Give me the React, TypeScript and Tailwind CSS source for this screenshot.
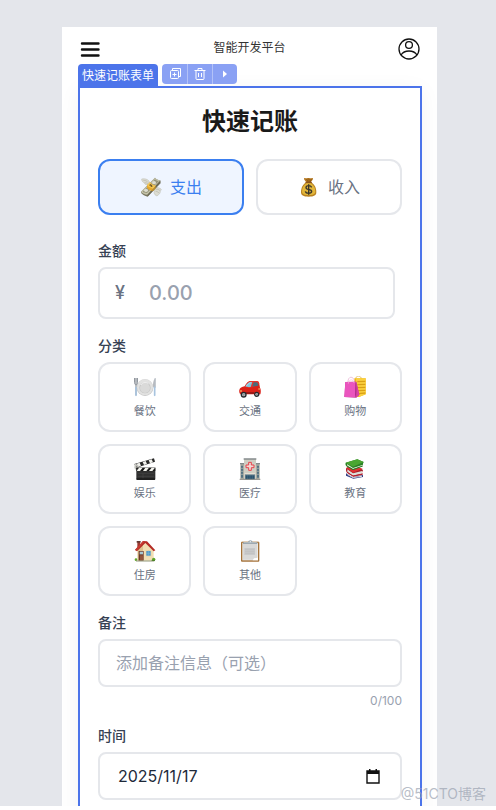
import { useState, type ReactNode } from "react";

type Kind = "expense" | "income";

function MoneyWings() {
  return (
    <svg viewBox="0 0 66 66" className="w-[22px] h-[22px]" aria-hidden="true">
      <path d="M5 9c9-2 17 0 22 6l4 9-9 3c-6-1-9-4-9-7-5-1-8-5-8-11z" fill="#dcdcd2" stroke="#b9b9ad" strokeWidth="1.5" />
      <path d="M10 13c6 0 11 2 15 7M14 20c4 0 7 1 10 4" stroke="#a9a99d" strokeWidth="1.5" fill="none" />
      <path d="M45 35c8-1 15 1 19 5-1 3-2 4-3 5 0 4-1 6-2 8-3 3-6 5-8 7-5-2-8-5-9-10z" fill="#dcdcd2" stroke="#b9b9ad" strokeWidth="1.5" />
      <path d="M47 40c5-1 9 0 13 4M47 46c4 0 7 2 10 5" stroke="#a9a99d" strokeWidth="1.5" fill="none" />
      <path d="M3 47 45 5c3 4 8 7 16 8l1 8-39 41C14 60 8 56 4 52z" fill="#77755f" />
      <path d="M3 47 45 5c3 4 8 7 16 8L22 56C13 55 7 52 3 47z" fill="#c4c2a8" />
      <path d="M8 47 45 10c3 3 6 5 11 6L21 51c-6-1-10-2-13-4z" fill="#96947a" />
      <ellipse cx="42" cy="20" rx="6" ry="5" fill="#deddd0" />
      <ellipse cx="18" cy="43" rx="6" ry="5" fill="#deddd0" />
      <path d="m21 28 9-9c4 5 10 9 17 10v8l-8 9c-8-2-15-6-18-11z" fill="#e6a72c" />
      <path d="m21 28 9-9c4 5 10 9 17 10l-8 9c-7-2-14-5-18-10z" fill="#f2c652" />
      <path d="m28 27 8 5M31 24l6 7" stroke="#6b5220" strokeWidth="3" />
      <path d="m23 57 38-40M23 60l38-39" stroke="#55533f" strokeWidth="1.2" />
    </svg>
  );
}

function MoneyBag() {
  return (
    <svg viewBox="0 0 66 66" className="w-[22px] h-[22px]" aria-hidden="true">
      <path d="M21 6c4 2 6-1 10 0 4-1 6 2 11 0 3 0 4 2 2 5l-7 9H26l-7-9c-2-3-1-5 2-5z" fill="#b57820" />
      <path d="m26 9 4 9M33 8v10M40 9l-4 9" stroke="#744712" strokeWidth="2" />
      <path d="M25 19h14c10 5 16 17 16 29 0 10-7 14-23 14S9 58 9 48c0-12 6-24 16-29z" fill="#b98220" />
      <path d="M26 22h12c9 5 14 15 14 25 0 7-7 10-20 10s-20-3-20-10c0-10 5-20 14-25z" fill="#e2b63a" />
      <path d="M24 19h16" stroke="#8b531c" strokeWidth="4" strokeLinecap="round" />
      <path d="M41 34c-2-4-5-5-9-5-5 0-8 2-8 6 0 8 17 3 17 11 0 4-4 6-9 6s-9-2-10-6M32 25v31" stroke="#3a362c" strokeWidth="4" fill="none" />
    </svg>
  );
}

function Plate() {
  return (
    <svg viewBox="0 0 66 66" className="w-[22px] h-[22px]" aria-hidden="true">
      <circle cx="33" cy="35" r="25" fill="#c4c4c4" />
      <circle cx="33" cy="34" r="24" fill="#e2e2e1" />
      <circle cx="33" cy="35" r="17" fill="#c6c6c5" />
      <circle cx="33" cy="36" r="15" fill="#dadad9" />
      <path d="M20 27c5-8 16-10 23-4" stroke="#f8f8f8" strokeWidth="3" fill="none" />
      <path d="M2 6v14c0 4 2 6 4 7v31M10 6v14c0 4-1 6-4 7M6 6v20" stroke="#7e858d" strokeWidth="3" fill="none" />
      <path d="M6 35v23" stroke="#a8c4df" strokeWidth="5" strokeLinecap="round" />
      <path d="M65 6c-6 3-8 13-7 28h7z" fill="#a1a5ab" />
      <path d="M63 6v30" stroke="#cbd1d8" strokeWidth="3" />
      <path d="M62 34v24" stroke="#a8c4df" strokeWidth="5" strokeLinecap="round" />
    </svg>
  );
}

function Car() {
  return (
    <svg viewBox="0 0 66 66" className="w-[22px] h-[22px]" aria-hidden="true">
      <path d="M1 42c1-7 8-9 16-11 6-11 12-16 19-16h16c6 0 8 3 9 10l2 10c3 4 3 14 1 20H4c-3-3-4-8-3-13z" fill="#dc2118" />
      <path d="M17 31c6-11 12-16 19-16h16c5 0 8 2 9 8L42 33c-9 3-19 3-25-2z" fill="#e8332a" />
      <path d="M19 31c5-8 10-13 16-13h5l-5 15c-6 1-12 0-16-2z" fill="#7fc5dc" />
      <path d="m44 19h8c4 0 5 3 6 10l-18 3z" fill="#496b7b" />
      <path d="M22 31c4-7 8-10 13-11" stroke="#c0edf6" strokeWidth="2" fill="none" />
      <path d="M3 45h6M58 39h5" stroke="#ffcf73" strokeWidth="3" />
      <path d="M20 51h25" stroke="#7e1715" strokeWidth="4" />
      <circle cx="14" cy="56" r="9" fill="#292b2e" />
      <circle cx="14" cy="56" r="5" fill="#b8bec1" />
      <circle cx="53" cy="55" r="8" fill="#292b2e" />
      <circle cx="53" cy="55" r="4" fill="#b8bec1" />
      <path d="M14 52v8M10 56h8M53 52v7M50 55h7" stroke="#666" strokeWidth="1" />
    </svg>
  );
}

function ShoppingBags() {
  return (
    <svg viewBox="0 0 66 66" className="w-[22px] h-[22px]" aria-hidden="true">
      <path d="M35 10c0-14 17-12 18 0" stroke="#d5a42d" strokeWidth="2" fill="none" />
      <path d="M31 7h34v48l-20 8-14-3z" fill="#efb714" />
      <path d="M35 7h30v48l-20 8z" fill="#fbd03f" />
      <path d="m40 17 24-1M40 26l24-1M40 35l24-1M41 44l23-1M42 53l22-2" stroke="#daa116" strokeWidth="4" />
      <path d="M12 18C11 1 29-3 32 18" stroke="#e6a5cb" strokeWidth="2" fill="none" />
      <path d="m4 18 33-1 9 39-9 9-36-2z" fill="#bf3794" />
      <path d="m4 18 31-1-1 47-33-1z" fill="#ea55be" />
      <path d="m35 17 5 24-6 23z" fill="#a12677" />
      <path d="m37 18 9 38-9 8z" fill="#d843a7" />
      <path d="M13 23c1-14 15-16 17-2" stroke="#f7b5dc" strokeWidth="2" fill="none" />
    </svg>
  );
}

function Clapper() {
  return (
    <svg viewBox="0 0 66 66" className="w-[22px] h-[22px]" aria-hidden="true">
      <path d="m1 18 59-17 3 10L7 29z" fill="#292929" />
      <path d="m8 17 9-3 4 9-9 3zM26 12l9-3 4 9-9 3zM44 7l9-3 4 9-9 3z" fill="#f1f1ed" />
      <path d="M2 18c6-1 14 5 14 11L6 36 1 30z" fill="#c5c5bf" />
      <path d="M7 29h57v34c0 2-1 3-3 3H10c-2 0-3-1-3-3z" fill="#303030" />
      <path d="M7 29h57v10H7z" fill="#171717" />
      <path d="m15 29 11 0-8 10H8zM34 29h11l-8 10H27zM53 29h10l-8 10H45z" fill="#f4f4ee" />
      <path d="M11 46h49M11 55h49M27 46v17" stroke="#4d4d4d" strokeWidth="1.5" />
      <path d="M8 63h55" stroke="#171717" strokeWidth="4" />
      <circle cx="8" cy="25" r="2" fill="#777" />
      <circle cx="10" cy="34" r="2" fill="#777" />
    </svg>
  );
}

function Hospital() {
  return (
    <svg viewBox="0 0 66 66" className="w-[22px] h-[22px]" aria-hidden="true">
      <path d="M4 16h15v48H4zM48 16h14v48H48z" fill="#a9aba1" />
      <path d="M15 3h36v61H15z" fill="#cfcec3" />
      <path d="M14 1h38v4H14zM3 15h12v4H3zM51 15h12v4H51z" fill="#858c8d" />
      <path d="M6 23h6v36H6zM54 23h6v36h-6z" fill="#557484" />
      <path d="M5 31h9M5 40h9M5 49h9M53 31h9M53 40h9M53 49h9" stroke="#b9bcb2" strokeWidth="2" />
      <path d="M29 13h8v8h8v8h-8v8h-8v-8h-8v-8h8z" fill="#f0d9d4" stroke="#e7434a" strokeWidth="3" />
      <path d="M18 47h30v17H18z" fill="#708793" />
      <path d="M20 52h26v12H20z" fill="#2a536d" />
      <path d="M33 51v13M26 51v13M40 51v13" stroke="#547b8e" strokeWidth="1.5" />
      <path d="M17 45h32v4H17z" fill="#e5e0d2" />
      <path d="M2 64h62" stroke="#8a8a85" strokeWidth="3" />
    </svg>
  );
}

function Books() {
  return (
    <svg viewBox="0 0 66 66" className="w-[22px] h-[22px]" aria-hidden="true">
      <path d="m6 46 20 12 31-7v6l-29 5L6 53z" fill="#303b82" />
      <path d="m10 48 17 10 27-5v3l-27 4-16-9z" fill="#e7e4e4" />
      <path d="m7 30 5-3 43 7 2 4-3 4 2 8-28 6L9 44c-3-3-4-9-2-14z" fill="#a91d28" />
      <path d="m10 34 17 12 27-7v8l-27 6-17-12z" fill="#dcded9" />
      <path d="m7 30 19-8 30 10-29 12z" fill="#df3033" />
      <path d="m9 43 18 11 28-6" stroke="#ba2030" strokeWidth="3" fill="none" />
      <path d="m5 14 17-5 18-5 19 8-2 5v7L27 35 8 25c-4-3-4-7-3-11z" fill="#298225" />
      <path d="m9 18 18 12 30-10v4L27 33 10 24z" fill="#e5eadb" />
      <path d="M5 14 40 4l19 8-32 14z" fill="#4aa632" />
      <path d="m7 23 20 12 29-11" stroke="#2a7a24" strokeWidth="3" fill="none" />
    </svg>
  );
}

function House() {
  return (
    <svg viewBox="0 0 66 66" className="w-[22px] h-[22px]" aria-hidden="true">
      <path d="M10 4h8v21h-8z" fill="#9d3b31" />
      <path d="M8 3h12v5H8z" fill="#623a35" />
      <path d="m34 6 25 24v32H11V28z" fill="#f1dfb3" />
      <path d="M11 28 27 12v50H11z" fill="#dfc28e" />
      <path d="m3 30 24-27 12 1 25 27-5 3L34 9 9 34z" fill="#b42c25" />
      <path d="m3 29 24-26 4 2-23 27z" fill="#c93d33" />
      <path d="M14 33h15v29H14z" fill="#6c3827" />
      <path d="M17 35h10v8H17z" fill="#a9c9d2" />
      <path d="M18 46h9v14h-9z" fill="#93553b" />
      <path d="M35 31h17v18H35z" fill="#e6d3a8" />
      <path d="M37 33h13v14H37z" fill="#4e9bca" />
      <path d="M43 32v16M36 40h15" stroke="#7fb3d0" strokeWidth="2" />
      <circle cx="6" cy="59" r="4" fill="#62a72e" />
      <circle cx="59" cy="58" r="5" fill="#62a72e" />
      <path d="M6 63h55" stroke="#91977a" strokeWidth="3" />
      <path d="M53 61h10" stroke="#437b20" strokeWidth="3" />
    </svg>
  );
}

function Clipboard() {
  return (
    <svg viewBox="0 0 66 66" className="w-[22px] h-[22px]" aria-hidden="true">
      <rect x="6" y="5" width="55" height="60" rx="3" fill="#a5733b" />
      <path d="M8 7h51" stroke="#b98a52" strokeWidth="3" />
      <path d="M10 9h47v52H10z" fill="#f0f0ee" />
      <path d="M12 12h43v41l-8 6H12z" fill="#d9d9d8" />
      <path d="m57 53-12 2-4 6h16z" fill="#fff" />
      <path d="M16 24h32v21H16z" fill="#c9cacb" />
      <path d="M18 28h28M18 34h28M18 40h28" stroke="#bcbdbe" strokeWidth="2" />
      <path d="M12 7h15c1-8 13-8 14 0h14v5H12z" fill="#9aa5ad" />
      <path d="M15 8h38" stroke="#c3ced4" strokeWidth="2" />
      <circle cx="34" cy="5" r="2" fill="#eef3f5" />
    </svg>
  );
}

const categories: { name: string; icon: ReactNode }[] = [
  { name: "餐饮", icon: <Plate /> },
  { name: "交通", icon: <Car /> },
  { name: "购物", icon: <ShoppingBags /> },
  { name: "娱乐", icon: <Clapper /> },
  { name: "医疗", icon: <Hospital /> },
  { name: "教育", icon: <Books /> },
  { name: "住房", icon: <House /> },
  { name: "其他", icon: <Clipboard /> },
];

function Header() {
  return (
    <header className="flex h-[37px] shrink-0 items-start justify-between px-4 pt-[10px]">
      <button aria-label="菜单" className="flex w-6 h-6 items-center justify-center">
        <svg viewBox="0 0 20 16" className="w-5 h-4" stroke="#111" strokeWidth="2.4" strokeLinecap="round">
          <path d="M2 2.500h16.500M2 8.500h16.500M2 14.500h16.500" />
        </svg>
      </button>
      <h1 className="text-xs leading-[22px] text-[#333]">智能开发平台</h1>
      <button aria-label="个人中心" className="w-6 h-6">
        <svg viewBox="0 0 24 24" className="w-6 h-6" fill="none" stroke="#111" strokeWidth="1.3">
          <circle cx="12" cy="12" r="10" />
          <circle cx="12" cy="8" r="3.4" />
          <path d="M4 18c1.6-2.6 4.5-4 8-4s6.400 1.400 8 4" />
        </svg>
      </button>
    </header>
  );
}

function Toolbar() {
  return (
    <div className="flex items-start gap-1">
      <span className="rounded-t-sm bg-[#4c74ea] px-1 pt-px text-xs leading-[21px] text-white">快速记账表单</span>
      <div className="flex h-5 divide-x divide-[#b3c2f8] overflow-hidden rounded-sm bg-[#8aa1f4] text-white">
        <button aria-label="复制" className="flex w-[26px] items-center justify-center">
          <svg viewBox="0 0 12 12" className="w-3 h-3" fill="none" stroke="currentColor">
            <path d="M3.500 2.500v-2h8v8h-2" />
            <rect x="1.500" y="2.500" width="8" height="8" rx="1" />
            <path d="M5.500 4.500v4M3.500 6.500h4" />
          </svg>
        </button>
        <button aria-label="删除" className="flex w-[25px] items-center justify-center">
          <svg viewBox="0 0 12 12" className="w-3 h-3" fill="none" stroke="currentColor">
            <path d="M.5 2.500h11M4 2.500v-2h4v2M2 2.500v8q0 1 1 1h6q1 0 1-1v-8M4.500 5v4M7.500 5v4" />
          </svg>
        </button>
        <button aria-label="更多" className="flex w-6 items-center justify-center">
          <svg viewBox="0 0 12 12" className="w-3 h-3" fill="currentColor">
            <path d="M4 2.500v7L8 6z" />
          </svg>
        </button>
      </div>
    </div>
  );
}

export default function App() {
  const [kind, setKind] = useState<Kind>("expense");
  const [category, setCategory] = useState("");
  const [note, setNote] = useState("");
  const [date, setDate] = useState("2025/11/17");

  const kindClass = (active: boolean) =>
    active
      ? "border-[#3b7ff0] bg-[#eff5ff] text-[#3b7ff0]"
      : "border-gray-200 bg-white text-gray-500";

  return (
    <div className="relative flex h-screen flex-col overflow-hidden border-b-4 border-white bg-[#e4e6eb] pt-[27px] pr-[59px] pl-[62px] font-[Inter,'Noto_Sans_CJK_SC',sans-serif]">
      <main className="flex min-h-0 flex-1 flex-col bg-white">
        <Header />

        <div className="min-h-0 flex-1 pr-[15px] pl-4">
          <Toolbar />

          <form
            className="border-2 border-[#4c74ea] px-[18px] pt-[18px] pb-8 shadow-[0_4px_20px_rgba(0,0,0,0.05)]"
            onSubmit={(e) => e.preventDefault()}
          >
            <h2 className="mb-[21px] text-center text-2xl font-bold text-[#1a1a1a]">快速记账</h2>

            <div className="mb-[26px] grid grid-cols-2 gap-3">
              <button
                type="button"
                onClick={() => setKind("expense")}
                className={`flex items-center justify-center gap-2 rounded-xl border-2 py-[14px] text-base ${kindClass(kind === "expense")}`}
              >
                <MoneyWings />
                支出
              </button>
              <button
                type="button"
                onClick={() => setKind("income")}
                className={`flex items-center justify-center gap-2 rounded-xl border-2 py-[14px] text-base ${kindClass(kind === "income")}`}
              >
                <MoneyBag />
                收入
              </button>
            </div>

            <div className="flex flex-col gap-[17px]">
              <div>
                <label htmlFor="amount" className="mb-[6px] block text-sm font-medium text-gray-700">
                  金额
                </label>
                <div className="mr-[7px] flex items-center rounded-lg border-2 border-gray-200 pl-[15px]">
                  <span className="w-[34px] text-lg font-medium text-gray-500">¥</span>
                  <input
                    id="amount"
                    inputMode="decimal"
                    placeholder="0.00"
                    className="h-12 min-w-0 flex-1 text-xl font-medium text-gray-800 outline-none placeholder:text-gray-400"
                  />
                </div>
              </div>

              <div>
                <p className="mb-[6px] text-sm font-medium text-gray-700">分类</p>
                <div className="grid grid-cols-3 gap-3">
                  {categories.map((item) => (
                    <button
                      key={item.name}
                      type="button"
                      onClick={() => setCategory(item.name)}
                      className={`flex flex-col items-center gap-[5px] rounded-xl border-2 pt-3 pb-[11px] ${
                        category === item.name ? "border-[#3b7ff0] bg-[#eff5ff]" : "border-gray-200"
                      }`}
                    >
                      {item.icon}
                      <span className="text-[11px] leading-4 text-gray-500">{item.name}</span>
                    </button>
                  ))}
                </div>
              </div>

              <div>
                <label htmlFor="note" className="mb-[6px] block text-sm font-medium text-gray-700">
                  备注
                </label>
                <input
                  id="note"
                  value={note}
                  maxLength={100}
                  onChange={(e) => setNote(e.target.value)}
                  placeholder="添加备注信息（可选）"
                  className="h-12 w-full rounded-lg border-2 border-gray-200 px-4 text-base text-gray-800 outline-none placeholder:text-gray-400"
                />
                <p className="mt-[6px] text-right text-xs text-gray-400">{note.length}/100</p>
              </div>

              <div>
                <label htmlFor="date" className="mb-[6px] block text-sm font-medium text-gray-700">
                  时间
                </label>
                <div className="flex items-center rounded-lg border-2 border-gray-200 pr-5 pl-[18px]">
                  <input
                    id="date"
                    value={date}
                    onChange={(e) => setDate(e.target.value)}
                    className="h-11 min-w-0 flex-1 text-base text-gray-800 outline-none"
                  />
                  <button type="button" aria-label="选择日期">
                    <svg viewBox="0 0 14 15" className="w-[14px] h-[15px]">
                      <path d="M1 2h12v12H1z" fill="none" stroke="#111" strokeWidth="1.400" />
                      <path d="M1 2h12v3H1zM3 0h1.500v2H3zM9.500 0H11v2H9.500z" fill="#111" />
                    </svg>
                  </button>
                </div>
              </div>
            </div>
          </form>
        </div>
      </main>

      <span className="absolute right-[10px] bottom-0 text-sm leading-6 text-gray-400/70">@51CTO博客</span>
    </div>
  );
}
